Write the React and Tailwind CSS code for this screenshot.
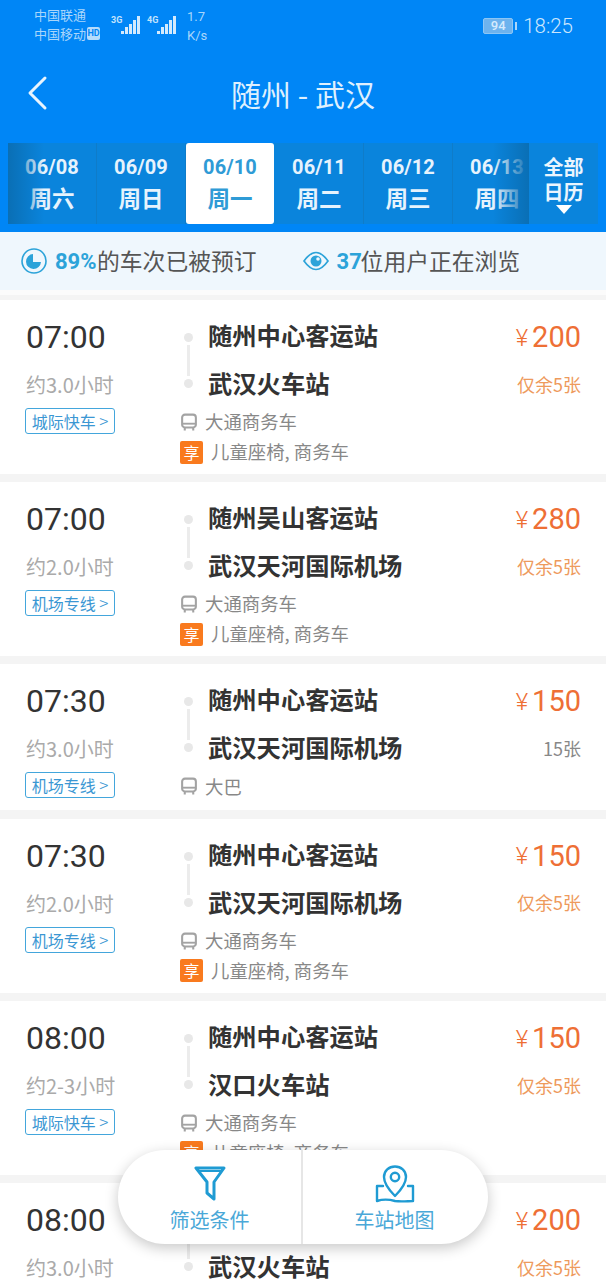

function Signal({ label }) {
  return (
    <div className="relative w-[36px] h-[20px]">
      <span className="absolute left-0 top-0 text-[9px] font-bold leading-[9px] text-[#c4e3fc] font-['Roboto',sans-serif]">{label}</span>
      <svg width="30" height="20" viewBox="0 0 30 20" className="absolute left-0 top-0" fill="#d3eafd">
        <rect x="10" y="15" width="3" height="3" />
        <rect x="14" y="11" width="3" height="7" />
        <rect x="18" y="8" width="3" height="10" />
        <rect x="22" y="4" width="3" height="14" />
        <rect x="26" y="0" width="3" height="18" />
      </svg>
    </div>
  );
}

function StatusBar() {
  return (
    <div className="h-[52px] flex items-start pl-[34px] pr-[33px] text-[#a9d6fb]">
      <div className="w-[71px] mt-[6px] flex flex-col font-['Noto_Sans_CJK_SC',sans-serif] text-[13px] leading-[18.5px]">
        <span>中国联通</span>
        <span className="flex items-center gap-[1px]">
          中国移动
          <span className="bg-[#b5dcfc] text-[#0086f6] text-[9px] font-bold leading-[13px] h-[13px] w-[13px] rounded-[2px] text-center font-['Roboto',sans-serif]">HD</span>
        </span>
      </div>
      <div className="ml-[6px] mt-[16px] flex w-[72px]">
        <Signal label="3G" />
        <Signal label="4G" />
      </div>
      <div className="ml-[4px] mt-[7px] font-['Roboto',sans-serif] text-[13px] leading-[19px] flex flex-col">
        <span>1.7</span>
        <span>K/s</span>
      </div>
      <div className="ml-auto mt-[18px] flex items-center">
        <div className="w-[30px] h-[16px] bg-[#6db3ee] border border-[#8cc6f5] rounded-[2px] text-[13px] leading-[14px] font-medium text-center text-[#d6ebfd] font-['Roboto',sans-serif]">94</div>
        <div className="w-[2px] h-[8px] bg-[#a9d6fb] ml-[2px]"></div>
      </div>
      <span className="ml-[6px] mt-[13px] font-['Roboto',sans-serif] text-[20.5px] leading-[26px] font-light text-[#cce6fd]">18:25</span>
    </div>
  );
}

function Header() {
  return (
    <div className="relative h-[91px] flex items-start justify-center">
      <svg width="24" height="36" viewBox="0 0 24 36" className="absolute left-[26px] top-[23px]" fill="none" stroke="#e8f4fe" strokeWidth="3" strokeLinecap="round" strokeLinejoin="round">
        <path d="M19 3 L4 18 L19 33" />
      </svg>
      <h1 className="mt-[19px] text-[30px] leading-[44px] font-normal text-[#dff0fe] font-['Noto_Sans_CJK_SC',sans-serif]">随州 - 武汉</h1>
    </div>
  );
}

const dates = [
  ['06/08', '周六'],
  ['06/09', '周日'],
  ['06/10', '周一', true],
  ['06/11', '周二'],
  ['06/12', '周三'],
  ['06/13', '周四'],
];

function DateBar() {
  return (
    <div className="h-[89px] px-[8px] flex items-start">
      <div className="relative w-[521px] h-[81px] bg-[#0a84dc] flex overflow-hidden">
        {dates.map(([d, w, active]) => (
          <div
            key={d}
            className={`shrink-0 h-[81px] flex flex-col items-center ${active ? 'w-[88px] mr-[1px] bg-white text-[#2f9bd6] rounded-[3px]' : 'w-[89px] text-[#e6f3fd] border-r border-[#0f7cc9]'}`}
          >
            <span className="mt-[11px] text-[20px] leading-[27px] font-bold font-['Roboto',sans-serif] tracking-[0.1px]">{d}</span>
            <span className="text-[22.5px] leading-[32px] font-bold font-['Noto_Sans_CJK_SC',sans-serif]">{w}</span>
          </div>
        ))}
        <div className="absolute left-0 top-0 h-full w-[36px] bg-gradient-to-r from-[#0a6fb5] to-[#0a84dc00]"></div>
        <div className="absolute right-0 top-0 h-full w-[36px] bg-gradient-to-l from-[#0a6fb5] to-[#0a84dc00]"></div>
      </div>
      <div className="w-[69px] h-[81px] bg-[#0a84dc] flex flex-col items-center text-[#eaf5fe] font-['Noto_Sans_CJK_SC',sans-serif] text-[20px] leading-[25px] font-bold">
        <span className="mt-[11px]">全部</span>
        <span>日历</span>
        <div className="mt-[1px] w-0 h-0 border-l-[8px] border-r-[8px] border-t-[9px] border-l-transparent border-r-transparent border-t-white"></div>
      </div>
    </div>
  );
}

function InfoBar() {
  return (
    <div className="h-[58px] bg-[#eff7fd] flex items-center pl-[21px] font-['Noto_Sans_CJK_SC',sans-serif] text-[22.8px] text-[#555]">
      <svg width="26" height="26" viewBox="0 0 26 26" className="mr-[8px]" fill="none">
        <circle cx="13" cy="13" r="12" stroke="#2ca3d9" strokeWidth="1.6" />
        <path d="M12 6 A7.5 7.5 0 1 0 20 14 L12 14 Z" fill="#2ca3d9" />
      </svg>
      <b className="w-[42px] font-bold text-[#2ca3d9] font-['Roboto',sans-serif] text-[22px]">89%</b>
      <span>的车次已被预订</span>
      <svg width="26" height="20" viewBox="0 0 26 20" className="ml-[46px] mr-[8px]" fill="none">
        <path d="M1 10 C6 3 10 1.5 13 1.5 C16 1.5 20 3 25 10 C20 17 16 18.5 13 18.5 C10 18.5 6 17 1 10 Z" stroke="#2ca3d9" strokeWidth="1.7" />
        <circle cx="13" cy="10" r="5.5" fill="#2ca3d9" />
        <circle cx="15" cy="8" r="1.8" fill="#eff7fd" />
      </svg>
      <b className="w-[24px] font-bold text-[#2ca3d9] font-['Roboto',sans-serif] text-[22px]">37</b>
      <span>位用户正在浏览</span>
    </div>
  );
}

function BusIcon() {
  return (
    <svg width="16" height="18" viewBox="0 0 17 18" fill="none">
      <rect x="1.2" y="1.2" width="14.6" height="13.6" rx="3" stroke="#a3a3a3" strokeWidth="2.2" />
      <path d="M1.5 10.8 H15.5" stroke="#a3a3a3" strokeWidth="2" />
      <path d="M4 15 V18 M13 15 V18" stroke="#a3a3a3" strokeWidth="2.2" />
    </svg>
  );
}

function Trip({ time, dur, tag, from, to, price, left, leftOrange = true, bus, amenity = true }) {
  return (
    <div className={`bg-white shrink-0 flex pl-[26px] pr-[25px] ${amenity ? 'h-[174px]' : 'h-[146px]'} font-['Noto_Sans_CJK_SC',sans-serif]`}>
      <div className="w-[155px] shrink-0 flex flex-col items-start">
        <span className="mt-[17px] text-[32px] leading-[40px] text-[#333] font-['Roboto',sans-serif]">{time}</span>
        <span className="mt-[14px] text-[20px] leading-[28px] text-[#aaa]">{dur}</span>
        <span className="mt-[9px] -ml-[1px] h-[26px] w-[90px] border border-[#43a6dc] rounded-[3px] text-[16px] leading-[23px] text-[#3b97d3] text-center whitespace-nowrap">{tag} <span className="text-[17px] font-light">&gt;</span></span>
      </div>
      <div className="flex-1 flex flex-col">
        <div className="flex h-[108px]">
          <div className="w-[27px] shrink-0 flex flex-col items-start pt-[33px] pl-[3px]">
            <div className="w-[9px] h-[9px] rounded-full bg-[#e8e8e8]"></div>
            <div className="w-[3px] h-[31px] ml-[3px] bg-[#ececec] mt-[3px]"></div>
            <div className="w-[9px] h-[9px] rounded-full bg-[#e8e8e8] mt-[3px]"></div>
          </div>
          <div className="flex-1 flex flex-col pt-[11px]">
            <span className="text-[24.3px] leading-[48px] font-bold text-[#333]">{from}</span>
            <span className="text-[24.3px] leading-[48px] font-bold text-[#333]">{to}</span>
          </div>
          <div className="flex flex-col items-end pt-[13px]">
            <span className="h-[48px] pt-[2px] flex items-center text-[#ee6f35] font-['Roboto',sans-serif]">
              <span className="text-[24px] font-light mr-[4px]">¥</span>
              <span className="text-[29px]">{price}</span>
            </span>
            <span className={`h-[48px] flex items-center text-[18px] ${leftOrange ? 'text-[#ee9a5c]' : 'text-[#888]'}`}>{left}</span>
          </div>
        </div>
        <div className="h-[28px] flex items-center gap-[8px]">
          <BusIcon />
          <span className="text-[18.4px] text-[#888]">{bus}</span>
        </div>
        {amenity && (
          <div className="h-[30px] mt-[1px] flex items-center -ml-[1px]">
            <span className="w-[23px] h-[23px] bg-[#f97a1e] rounded-[2px] text-white text-[16px] leading-[23px] text-center">享</span>
            <span className="ml-[8px] text-[18.4px] text-[#888]">儿童座椅, 商务车</span>
          </div>
        )}
      </div>
    </div>
  );
}

const trips = [
  { time: '07:00', dur: '约3.0小时', tag: '城际快车', from: '随州中心客运站', to: '武汉火车站', price: '200', left: '仅余5张', bus: '大通商务车' },
  { time: '07:00', dur: '约2.0小时', tag: '机场专线', from: '随州吴山客运站', to: '武汉天河国际机场', price: '280', left: '仅余5张', bus: '大通商务车' },
  { time: '07:30', dur: '约3.0小时', tag: '机场专线', from: '随州中心客运站', to: '武汉天河国际机场', price: '150', left: '15张', leftOrange: false, bus: '大巴', amenity: false },
  { time: '07:30', dur: '约2.0小时', tag: '机场专线', from: '随州中心客运站', to: '武汉天河国际机场', price: '150', left: '仅余5张', bus: '大通商务车' },
  { time: '08:00', dur: '约2-3小时', tag: '城际快车', from: '随州中心客运站', to: '汉口火车站', price: '150', left: '仅余5张', bus: '大通商务车' },
  { time: '08:00', dur: '约3.0小时', tag: '城际快车', from: '随州中心客运站', to: '武汉火车站', price: '200', left: '仅余5张', bus: '大通商务车' },
];

function BottomPill() {
  return (
    <div className="absolute left-[118px] top-[1150px] w-[370px] h-[94px] bg-white rounded-full shadow-[0_4px_14px_rgba(0,0,0,0.22)] flex font-['Noto_Sans_CJK_SC',sans-serif] text-[20px] text-[#4aa8d8]">
      <div className="w-[185px] border-r-2 border-[#e6e6e6] flex flex-col items-center pt-[15px]">
        <svg width="32" height="38" viewBox="0 0 32 38" fill="none" stroke="#1f9bd3" strokeWidth="3" strokeLinejoin="round">
          <path d="M2 3 H30 L20 17 V34 L13 28 V17 Z" />
          <path d="M5 6 H27" strokeWidth="2" />
        </svg>
        <span className="mt-[3px] leading-[28px]">筛选条件</span>
      </div>
      <div className="flex-1 flex flex-col items-center pt-[15px] pr-[2px]">
        <svg width="40" height="38" viewBox="0 0 40 38" fill="none" stroke="#1f9bd3" strokeWidth="2.4" strokeLinejoin="round" strokeLinecap="round">
          <path d="M20 31 C14 25 9 19 9 12 C9 5.5 14 1.5 20 1.5 C26 1.5 31 5.5 31 12 C31 19 26 25 20 31 Z" />
          <circle cx="20" cy="12" r="4.2" />
          <path d="M8 21 H2 V36 C8 34 13 34 20 36 C27 37 33 36 38 36 V21 H33" />
        </svg>
        <span className="mt-[3px] leading-[28px]">车站地图</span>
      </div>
    </div>
  );
}

export default function App() {
  return (
    <div className="relative w-[606px] h-[1280px] overflow-hidden bg-[#f4f4f4]">
      <div className="bg-[#0086f6] h-[232px]">
        <StatusBar />
        <Header />
        <DateBar />
      </div>
      <InfoBar />
      <div className="h-[5px] bg-[#fbfbfb]"></div>
      <div className="mt-[5px] flex flex-col gap-[8.2px]">
        {trips.map((t, i) => <Trip key={i} {...t} />)}
      </div>
      <BottomPill />
    </div>
  );
}
